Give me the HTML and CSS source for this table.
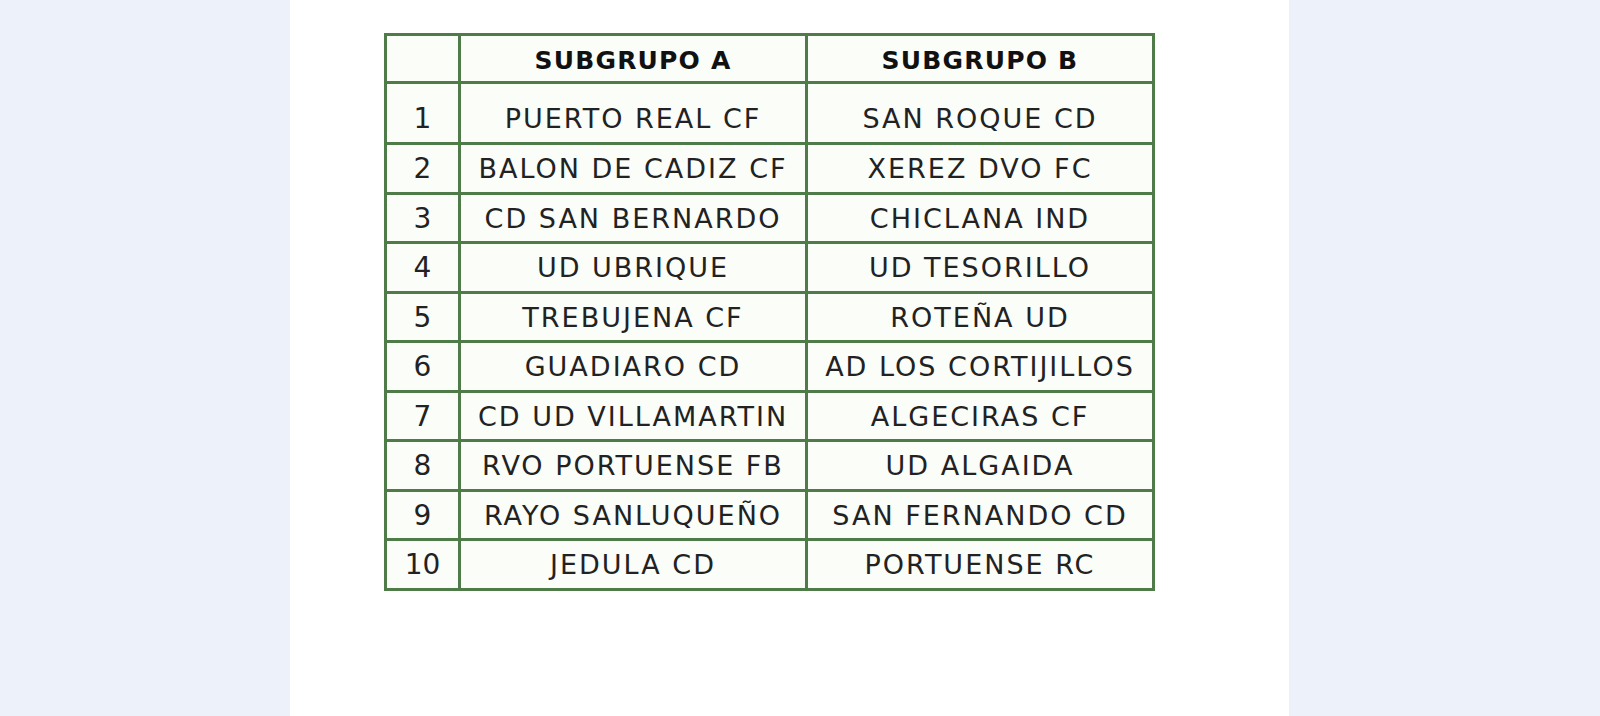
FILE: index.html
```html
<!DOCTYPE html>
<html lang="es">
<head>
<meta charset="utf-8">
<title>Subgrupos</title>
<link rel="stylesheet" href="styles.css">
</head>
<body>
<div class="page">
  <div class="panel">
    <table class="groups">
      <colgroup>
        <col class="c-num">
        <col class="c-team">
        <col class="c-team">
      </colgroup>
      <thead>
        <tr>
          <th></th>
          <th>SUBGRUPO A</th>
          <th>SUBGRUPO B</th>
        </tr>
      </thead>
      <tbody>
        <tr class="first"><td>1</td><td>PUERTO REAL CF</td><td>SAN ROQUE CD</td></tr>
        <tr><td>2</td><td>BALON DE CADIZ CF</td><td>XEREZ DVO FC</td></tr>
        <tr><td>3</td><td>CD SAN BERNARDO</td><td>CHICLANA IND</td></tr>
        <tr><td>4</td><td>UD UBRIQUE</td><td>UD TESORILLO</td></tr>
        <tr><td>5</td><td>TREBUJENA CF</td><td>ROTEÑA UD</td></tr>
        <tr><td>6</td><td>GUADIARO CD</td><td>AD LOS CORTIJILLOS</td></tr>
        <tr><td>7</td><td>CD UD VILLAMARTIN</td><td>ALGECIRAS CF</td></tr>
        <tr><td>8</td><td>RVO PORTUENSE FB</td><td>UD ALGAIDA</td></tr>
        <tr><td>9</td><td>RAYO SANLUQUEÑO</td><td>SAN FERNANDO CD</td></tr>
        <tr><td>10</td><td>JEDULA CD</td><td>PORTUENSE RC</td></tr>
      </tbody>
    </table>
  </div>
</div>
</body>
</html>
```
FILE: styles.css
```css
html, body {
  margin: 0;
  padding: 0;
  background: #edf1f9;
}
.page {
  display: flex;
  height: 716px;
  overflow: hidden;
}
.panel {
  margin-left: 290px;
  width: 999px;
  height: 716px;
  background: #ffffff;
  padding: 33px 0 0 94px;
  box-sizing: border-box;
}
.groups {
  border-collapse: collapse;
  table-layout: fixed;
  width: 769px;
  background: #fbfdf9;
  font-family: "DejaVu Sans", "Liberation Sans", sans-serif;
  color: #222222;
}
.c-num { width: 74px; }
.c-team { width: 347px; }
.groups th,
.groups td {
  border: 3px solid #4e7b47;
  text-align: center;
  vertical-align: middle;
  padding: 0;
  white-space: nowrap;
  overflow: hidden;
}
.groups th {
  height: 41px;
  font-size: 25px;
  font-weight: bold;
  color: #111111;
  padding-top: 4px;
  letter-spacing: 1.2px;
}
.groups td {
  height: 44.5px;
  padding-top: 2px;
  font-size: 27px;
  font-weight: normal;
  letter-spacing: 2px;
  line-height: 30px;
}
.groups tr.first td {
  height: 46px;
  padding-top: 12px;
}
.groups td:first-child {
  letter-spacing: 0;
  font-size: 28px;
}
```
